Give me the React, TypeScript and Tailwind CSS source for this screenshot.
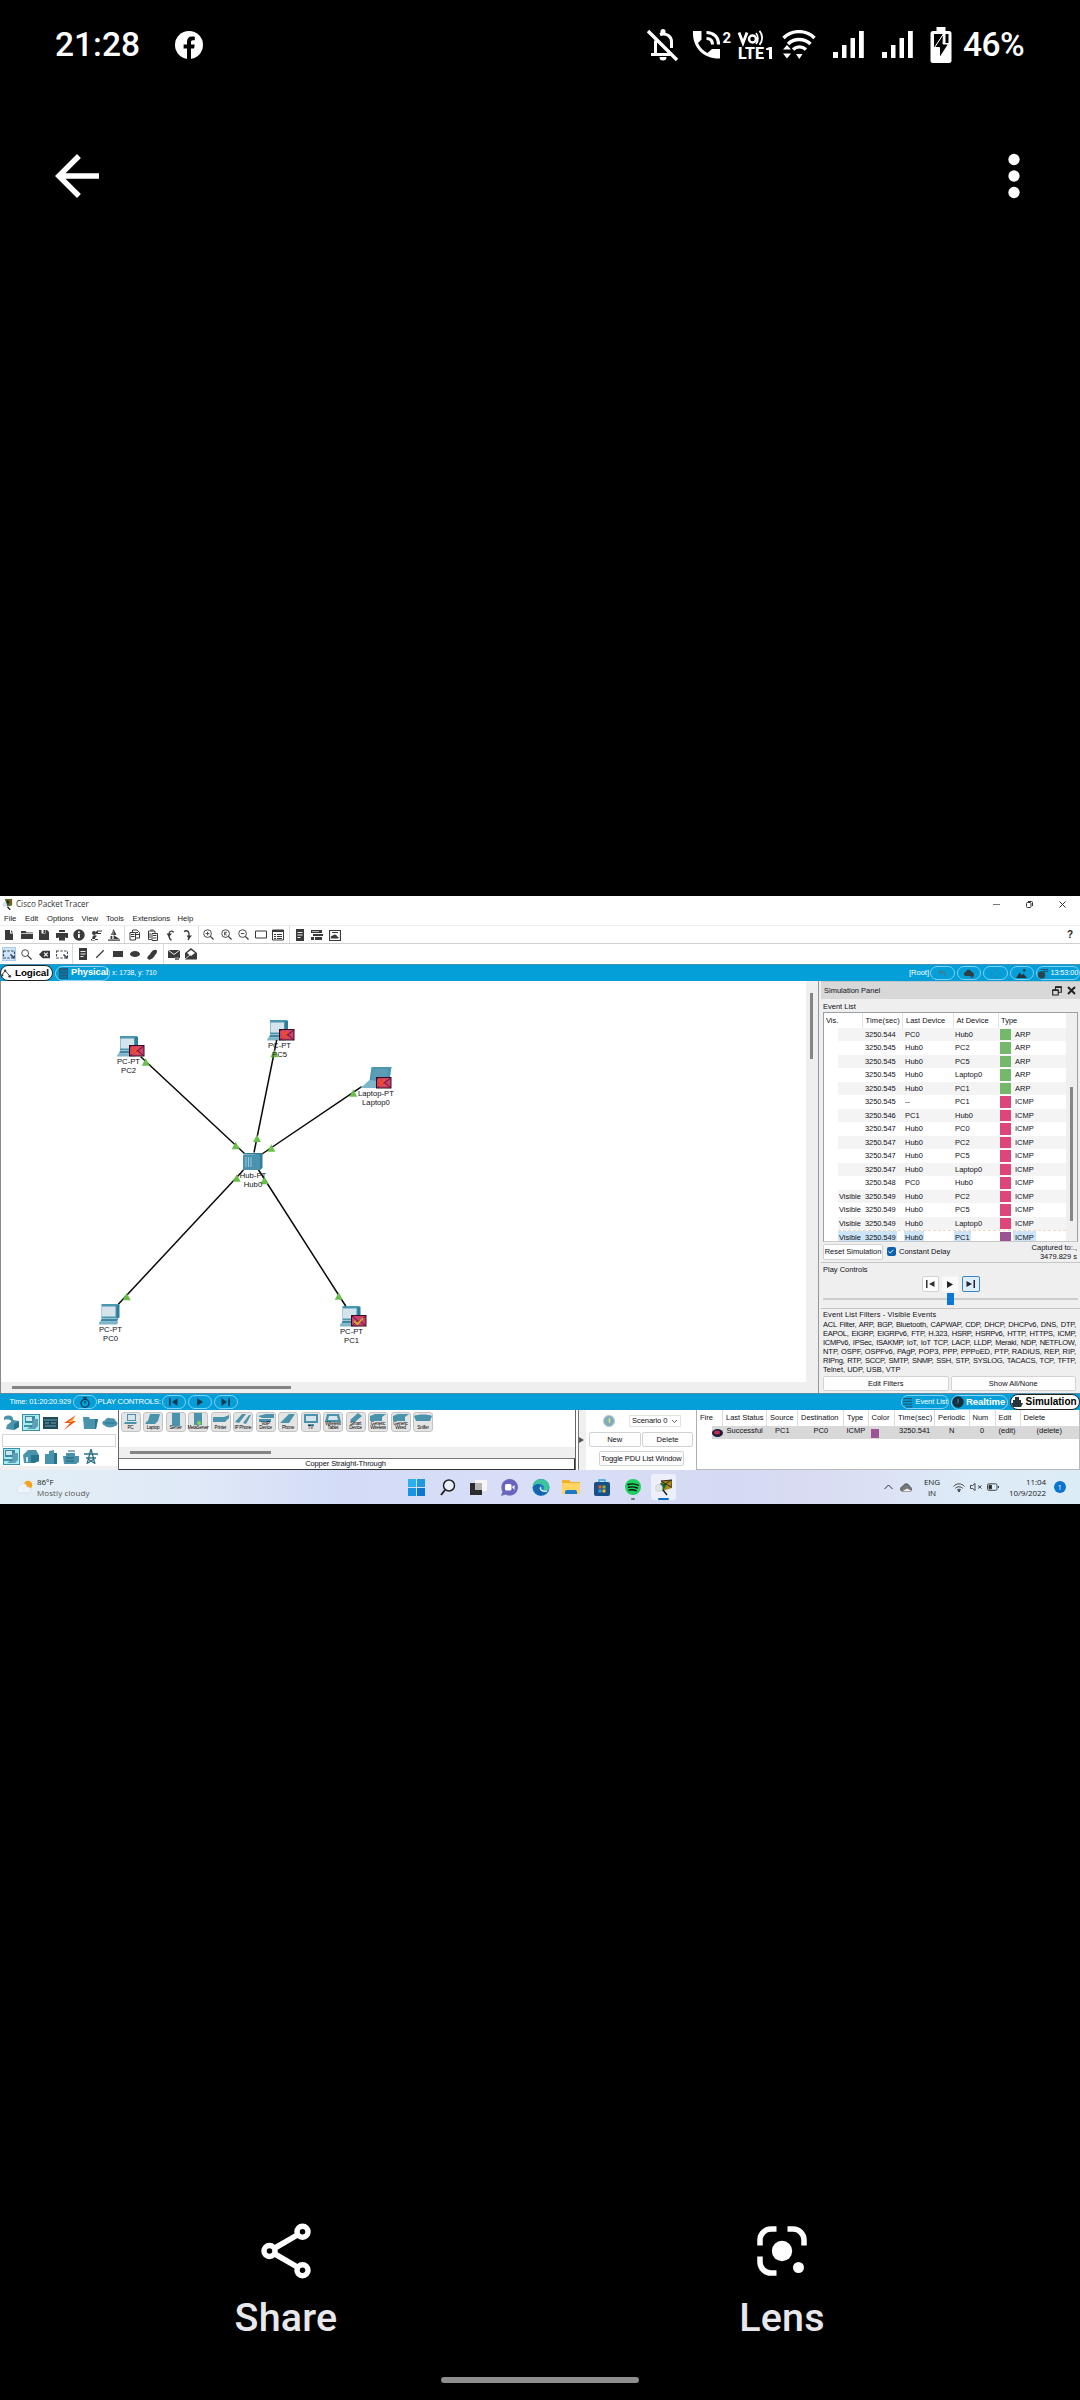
import React from "react";

type Kids = { children?: React.ReactNode };

/* ---------- generic helpers ---------- */

function G({ children, s = 12, c = "#3a3a3a" }: Kids & { s?: number; c?: string }) {
  return (
    <svg width={s} height={s} viewBox="0 0 12 12" fill={c} stroke="none" className="shrink-0 block">
      {children}
    </svg>
  );
}

function Cell({ children }: Kids) {
  return <div className="w-[17.4px] shrink-0 flex items-center justify-center">{children}</div>;
}

function Sep() {
  return <div className="w-px h-full bg-[#dcdcdc] mx-[1.5px] shrink-0" />;
}

/* ---------- phone chrome ---------- */

function Signal() {
  return (
    <svg width="31" height="29" viewBox="0 0 31 29" fill="#fff">
      <rect x="0" y="22" width="5" height="6" />
      <rect x="9" y="15" width="4.5" height="13" />
      <rect x="17.5" y="8" width="4.5" height="20" />
      <rect x="26" y="1" width="4.8" height="27" />
    </svg>
  );
}

function StatusBar() {
  return (
    <div className="h-[88px] pt-[1px] shrink-0 flex items-center px-[55px] text-white font-['Roboto']">
      <span className="text-[33.5px] font-medium leading-none w-[120px] pt-[1px]">21:28</span>
      <svg width="28" height="28" viewBox="0 0 28 28">
        <circle cx="14" cy="14" r="14" fill="#fff" />
        <path d="M12 28V17.600H8.600v-4H12v-3C12 7.200 14 5.400 17 5.400c1 0 2 .1 2.800.3v3.500h-1.800c-1.600 0-2 .8-2 1.900v2.500h3.700l-.6 4H16V28z" fill="#000" />
      </svg>
      <div className="ml-auto flex items-center">
        <svg width="32" height="32" viewBox="0 0 32 32" fill="none" stroke="#fff" strokeWidth="3">
          <path d="M4 25.500h19M8.500 25V11.500M13 5.500c6-2 11.500 1.500 11.500 7.500v6" />
          <path d="M1 2l29 29" strokeWidth="3.400" />
          <path d="M12.500 28h7a3.500 3.500 0 0 1-7 0zM13.500 5V2.500a2.500 2.500 0 0 1 5 0V5z" fill="#fff" stroke="none" />
        </svg>
        <svg width="40" height="30" viewBox="0 0 40 30" fill="#fff" className="ml-[13px] overflow-visible">
          <path d="M1 1h8.500v8.500L6 13c2 4.500 5.500 8 9.500 10l4.500-4h8v9.500C12 29 0 18 1 1z" />
          <path d="M14.500 2.500c7 0 12 4.500 12 12M14.500 8.500c4 0 6 2.500 6 6" fill="none" stroke="#fff" strokeWidth="3.200" />
          <text x="30.500" y="12.500" fontSize="15" fontFamily="Roboto" fontWeight="700">2</text>
        </svg>
        <svg width="36" height="30" viewBox="0 0 36 30" fill="#fff" className="ml-[6px] overflow-visible">
          <path d="M1 2.500l4 10.500 4-10.500" fill="none" stroke="#fff" strokeWidth="2.800" />
          <circle cx="14.500" cy="9" r="3.500" fill="none" stroke="#fff" strokeWidth="2.500" />
          <path d="M18 3c2.500 3 2.500 8 0 11M21.500.8c3.500 4 3.500 10 0 14" fill="none" stroke="#fff" strokeWidth="1.800" />
          <text x="0" y="29" fontSize="16" textLength="26" lengthAdjust="spacingAndGlyphs" fontFamily="Roboto" fontWeight="800">LTE</text>
          <path d="M28 18.500l3.500-1.500h2.500v12h-3v-9h-3z" />
        </svg>
        <svg width="34" height="30" viewBox="0 0 34 30" fill="none" stroke="#fff" strokeWidth="3.400" className="ml-[8px]">
          <path d="M1.500 8c8.500-8.500 22.500-8.500 31 0M6 14c6-6 16-6 22.500 0M11 19.500c4-3.500 9-3.500 13 0" />
          <path d="M14 24h6.500l-3.200 5zM1 19.500h8L5 15zM1 23.500h8L5 28.500z" fill="#fff" stroke="none" />
        </svg>
        <div className="ml-[17px]"><Signal /></div>
        <div className="ml-[18px]"><Signal /></div>
        <svg width="22" height="36" viewBox="0 0 22 36" className="ml-[17px]">
          <path d="M6.500 0h9v4H19a2.500 2.500 0 0 1 2.500 2.500v27A2.500 2.500 0 0 1 19 36H3a2.500 2.500 0 0 1-2.500-2.500v-27A2.500 2.500 0 0 1 3 4h3.500z" fill="#fff" />
          <path d="M4 7h9L5 20H4zM18.500 7v9h-3V7z" fill="#000" />
          <path d="M13.500 7L4.500 20.500h5V31l9-14h-5.500z" fill="#000" stroke="#fff" strokeWidth="1" />
        </svg>
        <span className="ml-[11px] text-[33.5px] font-medium leading-none w-[62px] pt-[1px] tracking-[-0.6px]">46%</span>
      </div>
    </div>
  );
}

/* ---------- toolbars ---------- */

function TopBars() {
  const K = "#3a3a3a";
  return (
    <div className="shrink-0 flex flex-col">
      <div className="h-[17px] flex items-center pl-[2px] pr-[14px]">
        <G s={11}>
          <path d="M3 0h8v7L6 8z" fill="#5c6b23" /><path d="M5 1l3 2-2 3z" fill="#1c1c14" /><path d="M8 2h3v3z" fill="#c03b22" /><path d="M4 3l4 1-2 4z" fill="#23492a" />
          <circle cx="3" cy="6" r="2.500" fill="#c9d8e4" opacity=".8" /><path d="M6 8.500L9 12" stroke="#222" strokeWidth="1.500" />
        </G>
        <span className="ml-[3px] text-[8.1px] leading-none text-[#333] font-['Open_Sans']">Cisco Packet Tracer</span>
        <div className="ml-auto flex items-center gap-[26px]">
          <div className="w-[7px] h-px bg-[#777]" />
          <svg width="7" height="7" viewBox="0 0 7 7" fill="none" stroke="#333" strokeWidth="1"><rect x=".5" y="1.500" width="4.500" height="5" rx="1" /><path d="M2 .5h3.500a1 1 0 0 1 1 1V5" /></svg>
          <svg width="7" height="7" viewBox="0 0 7 7" stroke="#333" strokeWidth="1"><path d="M.5.5l6 6M6.500.5l-6 6" /></svg>
        </div>
      </div>
      <div className="h-[12px] flex items-center pl-[4px] text-[7.7px] leading-none text-[#222]">
        <span className="w-[21px]">File</span><span className="w-[22px]">Edit</span><span className="w-[34.5px]">Options</span>
        <span className="w-[24.5px]">View</span><span className="w-[26.5px]">Tools</span><span className="w-[45px]">Extensions</span><span>Help</span>
      </div>
      <div className="h-[19px] border-y border-t-[#ececec] border-b-[#cfcfcf] flex items-center pl-[0.8px]">
        <Cell><G><path d="M2 1h5v3.500h3V11H2zM8 1l2 2.500H8z" /></G></Cell>
        <Cell><G><path d="M0 2h4.500l1 1.500H12V10H0z" /><path d="M0 4.500h12" stroke="#fff" strokeWidth=".7" /></G></Cell>
        <Cell><G><path d="M1 1h8l2 2v8H1z" /><path d="M3.500 1h4v3.500h-4z" fill="#fff" /><path d="M5.500 1h1.500v3H5.500z" /></G></Cell>
        <Cell><G><path d="M3 1h6v2H3zM0 4h12v5H9.500V8h-7v1H0zM3 8h6v3.500H3z" /></G></Cell>
        <Cell><G><circle cx="6" cy="6" r="5.700" /><path d="M5 5h1.800v4H5zM5 2.500h1.800v1.500H5z" fill="#fff" /></G></Cell>
        <Cell><G><circle cx="4" cy="4" r="2" /><path d="M2 11h6v-1H5c0-1.500 1-3 2.500-3C5 5.500 3 6 2.500 8zM5 4.500l2-3h5v1H8v1.500h3v1H7zM1 10h4v1.500H1z" /></G></Cell>
        <Cell><G><path d="M5.500 0L8.500 6H3zM0 10.500h12v1.200H0zM2.500 7h2v3h-2zM5.500 6l6 4h-6z" /><path d="M5 2v8" stroke="#fff" strokeWidth=".6" /></G></Cell>
        <Sep />
        <Cell><G><g fill="none" stroke={K} strokeWidth="1"><path d="M1 3.500h5.500V11H1zM3.500 3V1H8l2.500 2.500V9H7" /><path d="M2 5.500h3.500M2 7.500h3.500M7 3.500h2M7 5.500h3" /></g></G></Cell>
        <Cell><G><g fill="none" stroke={K} strokeWidth="1"><path d="M1.500 2H8v2M1.500 2v8.500h3M5 4.500h5.500v7H5z" /><path d="M3.500 1h3M6 6.500h3.500M6 9h3.500M3 4v5" /></g></G></Cell>
        <Cell><G><path d="M7.500 11C4.500 10 5 6.500 5 4.500M5 4.500c.5-3 4-3 4.500-1" fill="none" stroke={K} strokeWidth="1.400" /><path d="M2.500 4.500H8L5 8z" /></G></Cell>
        <Cell><G><path d="M3 2.500c4-2 5.500.5 5 5M7 11l1.500-3" fill="none" stroke={K} strokeWidth="1.400" /><path d="M5.500 6.500H11L8 10z" /></G></Cell>
        <Sep />
        <Zoom m="M3 5h4M5 3v4" /><Zoom m="M4 7V3.500h2L4.500 5 6 7" /><Zoom m="M3 5h4" />
        <Cell><svg width="12" height="9" viewBox="0 0 12 9" fill="none" stroke={K}><path d="M.5 1h11v7H.5z" strokeWidth="1" /></svg></Cell>
        <Cell><G><path d="M.5 1h11v10H.5z" fill="none" stroke={K} /><path d="M.5 1h11v2H.5zM2 5h2v1H2zM5 5h5v1H5zM2 7h2v1H2zM5 7h5v1H5zM2 9h2v1H2zM5 9h5v1H5z" /></G></Cell>
        <Sep />
        <Cell><G><path d="M2 0h8v12H2z" /><path d="M3.500 3.500h5M3.500 6h5M3.500 8.500h3" stroke="#fff" strokeWidth=".9" /></G></Cell>
        <Cell><G><path d="M0 1h11v3H0zM2 5h10v2H2zM0 8h3v3H0zM4 8h7v3H4z" /><path d="M1 2.500h7" stroke="#fff" strokeWidth=".6" /></G></Cell>
        <Cell><G><path d="M.5 1.500h11v10H.5z" fill="none" stroke={K} strokeWidth="1.200" /><path d="M2 9.500c-1-3 2-3 2-3 1-2 4-1 4 1 2 0 2 1.500 1 2zM3 3h6v1H3z" /></G></Cell>
        <span className="ml-auto mr-[7px] text-[10px] font-bold leading-none text-[#222]">?</span>
      </div>
      <div className="h-[20px] flex items-center pl-[0.8px]">
        <Cell><div className="w-[14px] h-[14px] bg-[#cce4f7] border border-[#a9cdea] flex items-center justify-center shrink-0"><Dash /></div></Cell>
        <Cell><G s={11}><circle cx="4.500" cy="4.500" r="3.700" fill="none" stroke={K} strokeWidth="1" /><path d="M7 7l4.500 4.500" stroke={K} strokeWidth="1.300" /></G></Cell>
        <Cell><G s={11}><path d="M0 6l4-4h8v8H4z" /><path d="M5.500 4l4 4M9.500 4l-4 4" stroke="#fff" strokeWidth="1.200" /></G></Cell>
        <Cell><Dash /></Cell>
        <Sep />
        <Cell><G><path d="M2 0h8v12H2z" /><path d="M3.500 3.500h5M3.500 6h5M3.500 8.500h3" stroke="#fff" strokeWidth=".9" /></G></Cell>
        <Cell><G s={10}><path d="M1.500 10.500l9-9" stroke={K} strokeWidth="1.400" /></G></Cell>
        <Cell><div className="w-[10px] h-[6.5px] bg-[#3a3a3a]" /></Cell>
        <Cell><div className="w-[10px] h-[6px] rounded-[50%] bg-[#3a3a3a]" /></Cell>
        <Cell><G s={11}><path d="M5 3c2-3 6-3 6-.5S9 6 8 8s-5 5-7 3 1-4 2-5 1-2 2-3z" /></G></Cell>
        <Sep />
        <Cell><G><path d="M0 2h12v8H0z" /><path d="M0 2l6 4.500L12 2" fill="none" stroke="#fff" strokeWidth=".9" /><path d="M7 12V9h4v3z" fill="#777" /></G></Cell>
        <Cell><G><path d="M0 5l6-5 6 5v6.500H0z" /><path d="M2 5l4-3 4 3-4 3z" fill="#fff" /><path d="M0 11l5-4" stroke="#fff" strokeWidth=".8" /></G></Cell>
      </div>
    </div>
  );
}

function Zoom({ m }: { m: string }) {
  return (
    <Cell>
      <svg width="11" height="11" viewBox="0 0 12 12" fill="none" stroke="#3a3a3a" strokeWidth="1"><circle cx="5" cy="5" r="4.200" /><path d={m} /><path d="M8 8l3.500 3.500" strokeWidth="1.400" /></svg>
    </Cell>
  );
}

function Dash() {
  return (
    <svg width="12" height="9" viewBox="0 0 12 9" fill="none" stroke="#3a4650" strokeWidth="1.100" className="shrink-0">
      <path d="M.5 1h11v7H.5z" strokeDasharray="2.500 1.300" /><path d="M7.500 4.500l4 4" strokeWidth="1.600" />
    </svg>
  );
}

function Pill({ children }: Kids) {
  return (
    <div className="w-[24.5px] h-[13.5px] rounded-full border border-[#7fd0f3] flex items-center justify-center shrink-0">{children}</div>
  );
}

function NavBar() {
  return (
    <div className="h-[17px] shrink-0 bg-[#049fd9] border-t border-[#3f94b8] flex items-center text-white text-[7.5px] leading-none">
      <div className="w-[53px] h-[16px] rounded-full bg-white border border-[#222] text-black flex items-center font-bold text-[9.9px]">
        <G s={11}><path d="M1 7.500L4.500 3 9 8" fill="none" stroke="#333" strokeWidth="1" /><circle cx="1.500" cy="8" r="1.200" /><circle cx="4.500" cy="3" r="1.300" /><circle cx="9.500" cy="9" r="1.500" /></G>
        <span className="ml-[3px] tracking-[-0.1px]">Logical</span>
      </div>
      <div className="w-[55px] h-[15px] ml-[1.5px] rounded-full border border-[#8fd5f3] flex items-center font-bold text-[9.3px]">
        <svg width="9" height="11" viewBox="0 0 9 11" className="ml-[3px]"><path d="M0 0h9v11H0z" fill="#1c5f80" /><path d="M1 3h7M1 6h7M1 9h7" stroke="#0b87b8" strokeWidth="1" /></svg>
        <span className="ml-[3.5px] tracking-[-0.05px]">Physical</span>
      </div>
      <span className="ml-[2.5px] text-[6.8px]">x: 1738, y: 710</span>
      <span className="ml-auto text-[7.5px]">[Root]</span>
      <div className="flex gap-[2px] ml-[1px]">
        <Pill><G s={10}><path d="M1 5l4-3v2h5v6H8V6H5v2z" fill="#3d7d95" /></G></Pill>
        <Pill><G s={12}><path d="M1 7c0-2 2-2 2-2 0-3 5-3 5.500 0 3 0 3 4 1 4H3C1 9 1 8 1 7z" fill="#303c42" /><path d="M7 9h4M9 7v4" stroke="#303c42" strokeWidth="1.200" /></G></Pill>
        <Pill><G s={11}><path d="M6 0l2 3H4zM6 12l2-3H4zM0 6l3-2v4zM12 6L9 4v4z" fill="#2d89ad" /></G></Pill>
        <Pill><G s={11}><path d="M0 11l4-6 2.500 3L8 6l4 5z" fill="#26343b" /><circle cx="9" cy="2.500" r="1.300" fill="#26343b" /></G></Pill>
        <div className="w-[44px] h-[13.5px] rounded-full border border-[#7fd0f3] flex items-center shrink-0">
          <G s={11}><circle cx="5" cy="7.500" r="4" fill="#2a4350" /><path d="M4 1h8v1H4zM7 3h5v1H7z" fill="#2a4350" /></G>
          <span className="ml-[2.5px] text-[7.3px] whitespace-nowrap tracking-[-0.1px]">13:53:00</span>
        </div>
      </div>
    </div>
  );
}

/* ---------- workspace ---------- */

function Pc({ x, y }: { x: number; y: number }) {
  return (
    <g transform={`translate(${x} ${y})`}>
      <path d="M3 0h17v14H3z" fill="#4b97b0" /><path d="M18 1.500l3-1v13l-3 1z" fill="#2f7d99" />
      <path d="M3.500 2.500h13.500v10H3.500z" fill="#d5e4ec" />
      <path d="M3 14.500h17l-1.500 3H2z" fill="#3e87a2" /><path d="M1 17.500h19L18.500 20.500H0z" fill="#7db6c8" />
    </g>
  );
}

function Envelope({ x, y, ok }: { x: number; y: number; ok?: boolean }) {
  return (
    <g transform={`translate(${x} ${y})`}>
      <rect x=".5" y=".5" width="14.500" height="10.500" fill="#d0406f" stroke="#30101c" />
      <path d="M1 1l6.500 5.500L15 1M1 11l5-5M15 11L9 6" fill="none" stroke="#5e1430" strokeWidth="1" />
      {ok ? <path d="M3 6l3.500 3L12 3" fill="none" stroke="#c5b52a" strokeWidth="1.800" /> : <path d="M2.500 2l6 7M9 2L2.500 9" stroke="#f5501c" strokeWidth="1.700" />}
    </g>
  );
}

const tips: [number, number][] = [
  [145.7, 1061.7], [235.7, 1145.3], [274.3, 1053.3], [257, 1138], [353.3, 1092.7],
  [271.3, 1147.7], [126.7, 1296.3], [236.7, 1177.7], [338.7, 1295.7], [264.3, 1180.3],
];

const labels: [number, number, string, string][] = [
  [128.5, 1057, "PC-PT", "PC2"], [279.5, 1040.5, "PC-PT", "PC5"], [376, 1089, "Laptop-PT", "Laptop0"],
  [253, 1170.5, "Hub-PT", "Hub0"], [110.5, 1325, "PC-PT", "PC0"], [351.5, 1327, "PC-PT", "PC1"],
];

function Workspace() {
  return (
    <div className="flex-1 flex flex-col bg-[#efefef] border-l border-[#8a8a8a]">
      <div className="flex h-[401px]">
        <div className="w-[805px] bg-white relative">
          <svg width="805" height="401" viewBox="1 981 805 401" className="absolute inset-0">
            <Pc x={117} y={1036} /><Pc x={267} y={1020} /><Pc x={98.5} y={1304} /><Pc x={339.5} y={1306} />
            <g stroke="#0a0a0a" strokeWidth="1.500">
              <path d="M140.700 1056.700L244.500 1153.500M276.700 1040L254 1152.500M361.700 1086.700L262 1154M118.300 1304.300L243.500 1170M345.700 1306L258 1169" />
            </g>
            <path d="M371.500 1067h20l-2 14h-20z" fill="#4b97b0" /><path d="M373 1069h15l-1.500 10.500h-15z" fill="#5b9db6" /><path d="M369.500 1080l8 1-1 7h-16z" fill="#7db6c8" />
            <path d="M243 1154.500l2-1.500h17.500l-2 2zM260 1155l2.500-2v15l-2.500 2z" fill="#2f7d99" /><path d="M243 1155h17v15h-17z" fill="#4b92ae" />
            <path d="M246 1157v10M248.500 1157v10M251 1157v10" stroke="#9ed0e0" strokeWidth=".9" />
            <Envelope x={129} y={1045} /><Envelope x={279} y={1029} /><Envelope x={376} y={1077} /><Envelope x={351} y={1315} ok />
            {tips.map(([x, y], i) => (
              <path key={i} d={`M${x} ${y - 3.5}l4 7.500h-8z`} fill="#6abf4b" />
            ))}
          </svg>
          {labels.map(([x, y, a, b]) => (
            <div key={b} className="absolute -translate-x-1/2 text-center text-[7.7px] leading-[9px] text-[#101018] whitespace-nowrap" style={{ left: x - 1, top: y - 981 }}>
              {a}<br />{b}
            </div>
          ))}
        </div>
        <div className="flex-1 pt-[12px] pl-[4px]"><div className="w-[3px] h-[66px] bg-[#858585]" /></div>
      </div>
      <div className="pt-[4px] pl-[11px]"><div className="w-[279px] h-[3px] bg-[#858585]" /></div>
    </div>
  );
}

/* ---------- simulation panel ---------- */

const events: [string, string, string, string][] = [
  ["", "3250.544", "PC0", "Hub0"], ["", "3250.545", "Hub0", "PC2"], ["", "3250.545", "Hub0", "PC5"], ["", "3250.545", "Hub0", "Laptop0"],
  ["", "3250.545", "Hub0", "PC1"], ["", "3250.545", "--", "PC1"], ["", "3250.546", "PC1", "Hub0"], ["", "3250.547", "Hub0", "PC0"],
  ["", "3250.547", "Hub0", "PC2"], ["", "3250.547", "Hub0", "PC5"], ["", "3250.547", "Hub0", "Laptop0"], ["", "3250.548", "PC0", "Hub0"],
  ["Visible", "3250.549", "Hub0", "PC2"], ["Visible", "3250.549", "Hub0", "PC5"], ["Visible", "3250.549", "Hub0", "Laptop0"], ["Visible", "3250.549", "Hub0", "PC1"],
];

const filters: [string, string][] = [
  ["ACL Filter, ARP, BGP, Bluetooth, CAPWAP, CDP, DHCP, DHCPv6, DNS, DTP,", "tracking-[-0.2px]"],
  ["EAPOL, EIGRP, EIGRPv6, FTP, H.323, HSRP, HSRPv6, HTTP, HTTPS, ICMP,", "tracking-[-0.25px]"],
  ["ICMPv6, IPSec, ISAKMP, IoT, IoT TCP, LACP, LLDP, Meraki, NDP, NETFLOW,", "tracking-[-0.25px]"],
  ["NTP, OSPF, OSPFv6, PAgP, POP3, PPP, PPPoED, PTP, RADIUS, REP, RIP,", "tracking-[-0.06px]"],
  ["RIPng, RTP, SCCP, SMTP, SNMP, SSH, STP, SYSLOG, TACACS, TCP, TFTP,", "tracking-[-0.25px]"],
];

function Btn({ children, k = "" }: Kids & { k?: string }) {
  return <div className={`border rounded-[2px] flex items-center justify-center whitespace-nowrap ${k}`}>{children}</div>;
}

function SimPanel() {
  return (
    <div className="w-[262px] shrink-0 border-l border-[#8e99a0] bg-[#efefef] pl-[2px] text-[7.5px] leading-none text-[#101018] flex flex-col">
      <div className="h-[18px] bg-[#d8d8d8] border-t border-[#b9c6cc] flex items-center pl-[3px] pr-[4px]">
        <span>Simulation Panel</span>
        <svg width="10" height="10" viewBox="0 0 10 10" fill="none" stroke="#222" className="ml-auto"><path d="M.7 4h5.500v5H.7zM3.500 3.500V.8h5.800v5.500H6.500" strokeWidth="1.100" /><path d="M3.500 1.200h6M.5 4.200h6" strokeWidth="1.600" /></svg>
        <svg width="9" height="9" viewBox="0 0 9 9" stroke="#222" strokeWidth="2" className="ml-[5px]"><path d="M1 1l7 7M8 1L1 8" /></svg>
      </div>
      <div className="h-[13px] flex items-center pl-[2px] pt-[2px]">Event List</div>
      <div className="h-[230px] ml-[2px] mr-[2px] bg-white border border-[#9aa0a6] border-b-[#c8c8c8] flex overflow-hidden">
        <div className="w-[242px] flex flex-col">
          <div className="h-[14.5px] shrink-0 flex items-center">
            <span className="w-[39px] pl-[2px] h-full flex items-center border-r border-[#e3e3e3]">Vis.</span>
            <span className="w-[40px] pl-[2.5px] h-full flex items-center border-r border-[#e3e3e3] tracking-[0.15px]">Time(sec)</span>
            <span className="w-[51px] pl-[3px] h-full flex items-center border-r border-[#e3e3e3] whitespace-nowrap">Last Device</span>
            <span className="w-[45px] pl-[2.5px] h-full flex items-center border-r border-[#e3e3e3]">At Device</span>
            <span className="pl-[2px]">Type</span>
          </div>
          {events.map(([v, t, l, a], i) => {
            const last = i === 15;
            const hl = last ? "bg-[#cce4f7]" : "";
            return (
              <div key={i} className={`h-[13.5px] shrink-0 flex items-center ml-[14px] ${last ? "border-t border-dashed border-[#f0d9c0]" : i % 2 === 0 ? "bg-[#f4f4f4]" : ""}`}>
                <span className={`w-[25px] h-full flex items-center pl-[1px] ${hl}`}>{v}</span>
                <span className={`w-[34px] h-full flex items-center pl-[2px] tracking-[-0.08px] ${hl}`}>{t}</span>
                <span className="w-[7px]" />
                <span className="w-[50px] h-full flex items-center"><span className={`h-full flex items-center px-[1px] ${hl}`}>{l}</span></span>
                <span className="w-[46px] h-full flex items-center"><span className={`h-full flex items-center px-[1px] ${hl}`}>{a}</span></span>
                <span className={`w-[11px] h-[11.5px] ${last ? "bg-[#9c5395]" : i < 5 ? "bg-[#74b86c]" : "bg-[#dd457b]"}`} />
                <span className={`ml-[2px] px-[2px] h-full flex items-center ${hl}`}>{i < 5 ? "ARP" : "ICMP"}</span>
              </div>
            );
          })}
        </div>
        <div className="flex-1 bg-[#efefef] pt-[74px] pl-[4px]"><div className="w-[3px] h-[134px] bg-[#858585]" /></div>
      </div>
      <div className="h-[21px] flex items-center border-b border-[#c6c6c6] pl-[2px] pr-[3px] pb-[2px] pt-[1px]">
        <Btn k="w-[60px] h-[16px] bg-[#fdfdfd] border-[#d2d2d2]">Reset Simulation</Btn>
        <div className="w-[9.5px] h-[9.5px] ml-[3.5px] rounded-[2px] bg-[#0d5fb0] flex items-center justify-center">
          <svg width="6" height="5" viewBox="0 0 6 5" fill="none" stroke="#fff"><path d="M.5 2.500L2.300 4 5.500.8" /></svg>
        </div>
        <span className="ml-[3px]">Constant Delay</span>
        <span className="ml-auto text-right leading-[9px]">Captured to:.,<br />3479.829 s</span>
      </div>
      <div className="h-[46px] border-b border-[#c6c6c6] pl-[2px] pr-[2px] pt-[2px]">
        <div className="h-[10px] flex items-center">Play Controls</div>
        <div className="flex justify-center gap-[3px] mt-[1px]">
          <Btn k="w-[17px] h-[16px] bg-[#fdfdfd] border-[#d2d2d2]"><svg width="9" height="8" viewBox="0 0 9 8" fill="#333"><path d="M0 0h1.500v8H0zM8.500 1v6L3 4z" /></svg></Btn>
          <Btn k="w-[17px] h-[16px] bg-[#fafafa] border-[#f4f4f4]"><svg width="6" height="7" viewBox="0 0 6 7" fill="#222"><path d="M0 0v7l6-3.500z" /></svg></Btn>
          <Btn k="w-[18px] h-[16px] bg-[#dfeefa] border-[#3a86c4]"><svg width="9" height="8" viewBox="0 0 9 8" fill="#223"><path d="M7.500 0H9v8H7.500zM.5 1v6L6 4z" /></svg></Btn>
        </div>
        <div className="h-[12px] mt-[1px] flex items-center justify-center relative">
          <div className="w-full h-[1.5px] bg-[#cdcdcd]" />
          <div className="absolute w-[7px] h-[12px] bg-[#0a78d4] left-[123.5px] top-0" />
        </div>
      </div>
      <div className="pl-[2px] pr-[4px] pt-[1px] flex-1">
        <div className="h-[10px] flex items-center tracking-[0.12px]">Event List Filters - Visible Events</div>
        {filters.map(([f, k]) => <div key={f} className={`h-[9px] leading-[9px] whitespace-nowrap text-justify [text-align-last:justify] ${k}`}>{f}</div>)}
        <div className="h-[9px] leading-[9px]">Telnet, UDP, USB, VTP</div>
        <div className="flex gap-[2px] mt-[2px]">
          <Btn k="flex-1 h-[15px] bg-[#fdfdfd] border-[#d2d2d2]">Edit Filters</Btn>
          <Btn k="flex-1 h-[15px] bg-[#fdfdfd] border-[#d2d2d2]">Show All/None</Btn>
        </div>
      </div>
    </div>
  );
}

/* ---------- bottom of the desktop app ---------- */

function PlayBar() {
  return (
    <div className="h-[17px] shrink-0 bg-[#049fd9] border-t border-[#5a8ba3] flex items-center text-white text-[7.7px] leading-none pl-[9.5px]">
      <span className="w-[63px] whitespace-nowrap text-[7.4px] tracking-[-0.1px]">Time: 01:20:20.929</span>
      <Pill><svg width="10" height="11" viewBox="0 0 10 11" fill="none" stroke="#0d3b52" strokeWidth="1.200"><circle cx="5" cy="6.300" r="4" /><path d="M5 6.500V4M3 .7h4M5 1v1.500" /></svg></Pill>
      <span className="w-[64px] whitespace-nowrap text-[7.7px] tracking-[-0.2px] ml-[0.5px]">PLAY CONTROLS:</span>
      <div className="flex gap-[1.5px]">
        <Pill><svg width="9" height="8" viewBox="0 0 9 8" fill="#0d3b52"><path d="M0 0h1.700v8H0zM8.500 0v8L3 4z" /></svg></Pill>
        <Pill><svg width="6" height="8" viewBox="0 0 6 8" fill="#0d3b52"><path d="M0 0v8l6-4z" /></svg></Pill>
        <Pill><svg width="9" height="8" viewBox="0 0 9 8" fill="#0d3b52"><path d="M7.300 0H9v8H7.300zM.5 0v8L6 4z" /></svg></Pill>
      </div>
      <div className="ml-auto flex items-center gap-[2px]">
        <div className="w-[48px] h-[13.5px] rounded-full border border-[#7fd0f3] flex items-center shrink-0">
          <G s={11}><path d="M1 1h10v1.500H1zM1 4h10v1.500H1zM1 7h10v1.500H1zM4 10h7v1.500H4z" fill="#1d5e7c" /></G>
          <span className="ml-[2.5px] text-[7.4px] whitespace-nowrap tracking-[-0.05px]">Event List</span>
        </div>
        <div className="w-[57px] h-[15px] rounded-full border border-[#8fd5f3] flex items-center font-bold text-[9.6px] shrink-0">
          <G s={12}><circle cx="6" cy="6" r="5.700" fill="#14303e" /><path d="M6 3v3.500l-1 1" stroke="#5d8ba0" fill="none" /></G>
          <span className="ml-[2px] tracking-[-0.1px]">Realtime</span>
        </div>
        <div className="w-[70px] h-[16px] rounded-full bg-white border border-[#222] text-black flex items-center font-bold text-[10px] shrink-0">
          <G s={12}><path d="M0 7h12l-2 4H2zM2 4h8v3H2zM4 1h4v3H4z" fill="#26343b" /></G>
          <span className="ml-[2.5px]">Simulation</span>
        </div>
      </div>
    </div>
  );
}

const T = "#4a93ac";
const tiles: [string, string, string][] = [
  ["PC", "", "M5 1h9v7H5zM3 9h12l-1 2H2z"], ["Laptop", "", "M6 1h10l-2 7H4zM3 8h11l-3 3H1z"], ["Server", "", "M5 0h8v13H5z"],
  ["MetaServer", "", "M5 0h8v12H5z"], ["Printer", "", "M1 4h11l5-2v3l-4 4H1z"], ["IP Phone", "", "M1 9l7-8h4L5 10zM9 10l6-8h2l-5 9z"],
  ["VoIP", "Device", "M1 3l8-2h8v4H5zM2 6h12v3H2z"], ["Phone", "", "M1 10l9-9h6l-6 9z"], ["TV", "", "M2 1h14v9H2zM6 11h6v2H6z"],
  ["Wireless", "Tablet", "M3 1h12l2 8H1z"], ["Smart", "Device", "M3 7l8-7 4 3-8 7z"], ["Generic", "Wireless", "M1 3l5-2h11l-4 3v4H1z"],
  ["Generic", "Wired", "M1 3l5-2h11l-4 3v4H1z"], ["Sniffer", "", "M0 3c3-2 15-2 18 0l-2 5H2z"],
];

function PcMini() {
  return <svg width="15" height="13" viewBox="0 0 15 13"><path d="M1 0h10v7H1z" fill="#3c88a3" /><path d="M2 1h6v4H2z" fill="#c9e8f0" /><path d="M9 3h5v7l-3 3H3l5-4z" fill="#5f9fb5" /><path d="M0 10h8" stroke="#27748f" strokeWidth="1.500" /></svg>;
}

function Devices() {
  const sel = "bg-[#a5eef0] border border-[#3a8da5]";
  return (
    <div className="w-[118px] shrink-0 flex flex-col bg-white border-b-4 border-[#f0f0f0]">
      <div className="h-[24px] flex items-center pl-[2px] gap-[1px] pt-[1px]">
        <div className="w-[19px] flex justify-center"><svg width="17" height="16" viewBox="0 0 17 16" fill={T}><path d="M1 2c5-3 10-1 9 3l6 1v6l-5 3-8-1 1-4 4-3c1-2-3-3-7-2z" /><path d="M16 6v6l-5 3V9z" fill="#27748f" /></svg></div>
        <div className={`w-[18px] h-[17px] flex justify-center items-center ${sel}`}><PcMini /></div>
        <div className="w-[19px] flex justify-center"><svg width="15" height="12" viewBox="0 0 15 12"><path d="M0 0h15v12H0z" fill="#1f4a5a" /><path d="M1 3h13M2 6h4M8 6h5M2 9h11" stroke="#6fa0b2" /></svg></div>
        <div className="w-[18px] flex justify-center"><svg width="15" height="15" viewBox="0 0 15 15"><path d="M13 0L1 8l6 0-6 7 12-9H8z" fill="#f2541b" /><path d="M12 2L5 7l4 0z" fill="#ffb02e" /></svg></div>
        <div className="w-[20px] flex justify-center"><svg width="15" height="13" viewBox="0 0 15 13" fill={T}><path d="M0 1h6l1 2h8l-2 10H1z" /><path d="M12 3l3 0-2 10h-1z" fill="#27748f" /></svg></div>
        <div className="w-[17px] flex justify-center"><svg width="16" height="11" viewBox="0 0 16 11" fill={T}><path d="M2.500 8.500C-1 7 0 3.500 3 3.500 4 1 7 0 9 1.500c2-1 5 .5 4.500 2.500 3 1 2.500 4.500-.5 5-2 2-8 2-10.500-.5z" /><path d="M3 6h10" stroke="#27748f" /></svg></div>
      </div>
      <div className="h-[13px] mx-[2px] border border-[#d6d6d6] bg-white" />
      <div className="h-[19px] flex items-center pl-[3px] gap-[2.5px]">
        <div className={`w-[17px] h-[17px] flex justify-center items-center ${sel}`}><PcMini /></div>
        <div className="w-[17px] flex justify-center"><svg width="16" height="13" viewBox="0 0 16 13" fill={T}><path d="M0 5l5-5h8l3 5v6l-5 2H1z" /><path d="M8 5h8v6l-5 2H8z" fill="#27748f" /><path d="M3 7h2v5H3z" fill="#cde6ee" /></svg></div>
        <div className="w-[17px] flex justify-center"><svg width="12" height="14" viewBox="0 0 12 14" fill={T}><path d="M0 4h4V1l5-1v3h3v11H0z" /><path d="M9 3h3v11H9z" fill="#27748f" /></svg></div>
        <div className="w-[18px] flex justify-center"><svg width="16" height="14" viewBox="0 0 16 14" fill={T}><path d="M0 6h3V3h9v3h4v6l-3 2H1z" /><path d="M5 1h7M3 8h8M3 11h8" stroke="#1d5c73" strokeWidth="1.200" /></svg></div>
        <div className="w-[17px] flex justify-center"><svg width="14" height="15" viewBox="0 0 14 15" fill="none" stroke="#2c6f86" strokeWidth="1.300"><path d="M7 0L3 15M7 0l4 15M0 5h14M2 9h10M4 10l6 4M10 10l-6 4" /></svg></div>
      </div>
    </div>
  );
}

function Picker() {
  return (
    <div className="w-[458px] shrink-0 border-l border-r border-[#666] flex flex-col bg-white">
      <div className="h-[37px] flex gap-[2.5px] pl-[1.5px] pt-[1.5px]">
        {tiles.map(([a, b, d], i) => (
          <div key={i} className="w-[20px] h-[20px] shrink-0 rounded-[3px] bg-[#e4e4e4] border border-[#c4c4c4] relative flex flex-col justify-end items-center">
            <svg width="18" height="13" viewBox="0 0 18 13" className="absolute top-0 left-0" fill={T}>
              <path d={d} />
              {i === 0 && <path d="M6 2h7v5H6z" fill="#d5e4ec" />}
              {i === 8 && <path d="M4 3h10v5H4z" fill="#d5e4ec" />}
              {i === 9 && <path d="M5 3h8l1 4H4z" fill="#d5e4ec" />}
              {i === 3 && <circle cx="10" cy="10" r="2" fill="#8fd14f" />}
            </svg>
            <span className="relative text-[4.6px] leading-[4.3px] text-center text-black tracking-[-0.25px] whitespace-nowrap">{a}{b && <><br />{b}</>}</span>
          </div>
        ))}
      </div>
      <div className="h-[11px] bg-[#efefef] pt-[4px] pl-[11px]"><div className="w-[141px] h-[3px] bg-[#858585]" /></div>
      <div className="h-[12px] border border-l-0 border-[#333] border-t-[#777] flex items-center justify-center text-[7.5px] leading-none text-[#101018]">
        <span className="-ml-[2px] tracking-[-0.1px]">Copper Straight-Through</span>
      </div>
    </div>
  );
}

function Scenario() {
  return (
    <div className="w-[121px] shrink-0 flex bg-white text-[7.6px] leading-none text-[#101018]">
      <div className="w-[3px] bg-white border-r border-[#777]" />
      <div className="w-[7px] bg-[#f0f0f0] flex items-center"><svg width="5" height="6" viewBox="0 0 5 6"><path d="M0 0v6l5-3z" fill="#555" /></svg></div>
      <div className="flex-1 border-r border-[#b0b0b0] px-[3px] pt-[5px]">
        <div className="flex items-center h-[12px] pl-[14px]">
          <div className="w-[12px] h-[12px] rounded-full bg-[#7fadbb] border border-[#b8c6cc] flex items-center justify-center text-[8px] font-bold text-[#f0ea6a]">i</div>
          <div className="ml-[14px] w-[52px] h-[12px] border border-[#e2e2e2] flex items-center pl-[2px] whitespace-nowrap tracking-[-0.1px]">Scenario 0
            <svg width="5" height="3" viewBox="0 0 5 3" className="ml-[5px]" fill="none" stroke="#444" strokeWidth=".8"><path d="M0 0l2.500 2.500L5 0" /></svg>
          </div>
        </div>
        <div className="flex gap-[1.5px] mt-[5px]"><Btn k="w-[51.5px] h-[15px] bg-[#fdfdfd] border-[#d2d2d2]">New</Btn><Btn k="w-[51px] h-[15px] bg-[#fdfdfd] border-[#d2d2d2]">Delete</Btn></div>
        <Btn k="w-[85px] h-[15px] ml-[10px] mt-[4px] bg-[#fdfdfd] border-[#d2d2d2] text-[7.5px] tracking-[-0.1px]">Toggle PDU List Window</Btn>
      </div>
    </div>
  );
}

function PduList() {
  const h = "h-full flex items-center border-r border-[#ddd] pl-[3px] whitespace-nowrap";
  return (
    <div className="flex-1 bg-white text-[7.5px] leading-none text-[#101018] border-b border-[#bbb] border-r overflow-hidden">
      <div className="h-[15.5px] flex items-center">
        <span className="w-[26px] h-full flex items-center pl-[3px] border-r border-[#ddd]">Fire</span><span className={`w-[44px] ${h}`}>Last Status</span>
        <span className={`w-[31px] ${h}`}>Source</span><span className={`w-[46px] ${h}`}>Destination</span><span className={`w-[24.5px] ${h}`}>Type</span>
        <span className={`w-[26.5px] ${h}`}>Color</span><span className={`w-[40px] tracking-[0.15px] ${h}`}>Time(sec)</span><span className={`w-[34.5px] ${h}`}>Periodic</span>
        <span className={`w-[26px] ${h}`}>Num</span><span className={`w-[25px] ${h}`}>Edit</span><span className="pl-[3px]">Delete</span>
      </div>
      <div className="h-[13.5px] ml-[15px] bg-[#d8d8d8] flex items-center pb-[3px]">
        <svg width="11" height="8" viewBox="0 0 11 8" className="mt-[4px] shrink-0"><ellipse cx="5.500" cy="4" rx="5.500" ry="4" fill="#1d1d3a" /><ellipse cx="5" cy="3.500" rx="3" ry="2" fill="#c02c50" /></svg>
        <span className="w-[52px] pl-[3.5px]">Successful</span><span className="w-[38.5px]">PC1</span><span className="w-[33px]">PC0</span><span className="w-[24px]">ICMP</span>
        <span className="w-[8px] h-[8.5px] bg-[#9c5395] mt-[5px]" /><span className="w-[50px] ml-[20.500px]">3250.541</span><span className="w-[31px]">N</span>
        <span className="w-[18.5px]">0</span><span className="w-[38px]">(edit)</span><span>(delete)</span>
      </div>
    </div>
  );
}

/* ---------- Windows taskbar ---------- */

function Taskbar() {
  return (
    <div className="h-[34px] shrink-0 flex items-center bg-[linear-gradient(90deg,#e3eff6_0%,#dfe9f7_18%,#d3dbf7_32%,#d9dff6_50%,#d5daf3_68%,#d9dcf2_76%,#deebf8_90%,#dcecf6_100%)] font-['Open_Sans'] text-[#222] relative">
      <svg width="18" height="14" viewBox="0 0 18 14" className="ml-[15px]"><circle cx="13" cy="5" r="4.300" fill="#f7a21b" /><path d="M4 13a4 4 0 0 1 0-7c2-4 8-3 8 1 5-1 5 6 1 6z" fill="#eef3f9" stroke="#c3d2e4" strokeWidth=".5" /></svg>
      <div className="ml-[4px] text-[8px] leading-[11px] tracking-[-0.05px] w-[100px] -mt-[1px]">86°F<br /><span className="text-[#555] tracking-[0.1px]">Mostly cloudy</span></div>
      <div className="absolute left-[408px] top-0 h-full flex items-center">
        <svg width="17" height="17" viewBox="0 0 17 17"><path d="M0 0h8v8H0z" fill="#2bb0ee" /><path d="M9 0h8v8H9z" fill="#2199e2" /><path d="M0 9h8v8H0z" fill="#1795e0" /><path d="M9 9h8v8H9z" fill="#0c78d0" /></svg>
        <svg width="16" height="17" viewBox="0 0 16 17" fill="none" stroke="#222" className="ml-[15px]"><circle cx="9" cy="6.500" r="5.500" fill="#ecf0fa" strokeWidth="1.500" /><path d="M5 11l-4 5" strokeWidth="2" /></svg>
        <svg width="17" height="16" viewBox="0 0 17 16" className="ml-[13.5px]"><path d="M5 1h12v11H5z" fill="#f6f6f6" /><path d="M0 4h12v12H0z" fill="#2c2c2c" /><path d="M5 4h7v7H5z" fill="#b5b5b5" /></svg>
        <svg width="17" height="17" viewBox="0 0 17 17" className="ml-[14.5px]"><path d="M8.500 0a8.300 8.300 0 1 1-4 15.500L0 17l1.500-4.500A8.300 8.300 0 0 1 8.500 0z" fill="#6a63bf" /><rect x="4" y="5" width="6.500" height="6.500" rx="1.500" fill="#fff" /><path d="M11 8l2.500-2v5z" fill="#fff" /></svg>
        <svg width="18" height="17" viewBox="0 0 18 17" className="ml-[13.5px]"><circle cx="9" cy="8.500" r="8.500" fill="#1f84cf" /><path d="M1 6C3-2 17-2 17.500 8c0 4-4 4-6 3 2-4-1-6-4-6S2 6 1 9z" fill="#3cc59b" /><path d="M1 8c3-5 9-3 9 1-3 0-2 5 5 4-3 5-13 5-14-5z" fill="#1464b0" /><path d="M9 8c-2 2 1 5 6 4" fill="none" stroke="#dfe9fa" strokeWidth="1.500" /></svg>
        <svg width="18" height="16" viewBox="0 0 18 16" className="ml-[12.5px]"><path d="M0 1h7l2 2h9v12H0z" fill="#efb02e" /><path d="M0 4h18v11H0z" fill="#ffd45f" /><path d="M3 15v-2a2 2 0 0 1 2-2h8a2 2 0 0 1 2 2v2z" fill="#1a78cc" /></svg>
        <svg width="16" height="17" viewBox="0 0 16 17" className="ml-[14px]"><path d="M5 4V1h6v3" fill="none" stroke="#2ba6e0" strokeWidth="1.300" /><rect y="3" width="16" height="14" rx="2" fill="#174f86" /><path d="M4.500 6.500h3v3h-3z" fill="#ee5a2a" /><path d="M8.500 6.500h3v3h-3z" fill="#7dbb32" /><path d="M4.500 10.500h3v3h-3z" fill="#2aa7ea" /><path d="M8.500 10.500h3v3h-3z" fill="#fcb92c" /></svg>
        <div className="ml-[15px] relative"><svg width="16" height="16" viewBox="0 0 16 16"><circle cx="8" cy="8" r="8" fill="#1ed05f" /><path d="M3 5.500c3.500-1 7.500-.7 10.500.8M3.500 8.300c3-.8 6-.5 8.800.7M4 11c2.500-.6 5-.3 7.200.7" fill="none" stroke="#111" strokeWidth="1.400" strokeLinecap="round" /></svg><div className="absolute top-[19px] left-[6px] w-[4px] h-[1.5px] bg-[#777] rounded" /></div>
        <div className="ml-[10px] w-[25px] h-[26px] rounded-[3px] bg-[#edf0fb] relative flex items-center justify-center">
          <svg width="17" height="17" viewBox="0 0 17 17"><path d="M6 2l11-1v8l-10 3z" fill="#a98a20" /><path d="M5 4l7 1-4 7z" fill="#1a6a2c" /><path d="M6 2l10 6M16 1l-7 5M6 2l11-1v8" fill="none" stroke="#332a10" /><circle cx="4" cy="9" r="3.500" fill="#dfe6ea" stroke="#bbb" strokeWidth=".5" /><path d="M8 11l4 5" stroke="#222" strokeWidth="1.500" /></svg>
          <div className="absolute bottom-0 left-[7px] w-[11px] h-[2px] rounded bg-[#0f6fc5]" />
        </div>
      </div>
      <div className="ml-auto flex items-center pr-[14.5px]">
        <svg width="9" height="6" viewBox="0 0 9 6" fill="none" stroke="#333"><path d="M.5 5l4-4 4 4" /></svg>
        <svg width="12" height="9" viewBox="0 0 12 9" className="ml-[7px]"><path d="M2 8.500C-1 6 1 3.500 3 3.500c1-4 6-3 6.500 0C12 4 12 8 10 8.500z" fill="#777" stroke="#444" strokeWidth=".8" /><path d="M2 8.500l5-3 4 2-1 1z" fill="#eee" /></svg>
        <span className="ml-[10px] w-[20px] text-center text-[8px] leading-[11px] tracking-[-0.1px] -mt-[1px]">ENG<br />IN</span>
        <svg width="12" height="9" viewBox="0 0 12 9" className="ml-[11px]" fill="none" stroke="#333" strokeWidth=".9"><path d="M.5 3.500c3-3.500 8-3.500 11 0M2.300 5.300c2-2 5.400-2 7.400 0M4 7c1-1 3-1 4 0" /><circle cx="6" cy="8" r=".8" fill="#333" /></svg>
        <svg width="12" height="8" viewBox="0 0 12 8" className="ml-[4.5px]" fill="none" stroke="#333" strokeWidth=".9"><path d="M.5 2.500h2L5 .5v7L2.500 5.500h-2zM8 2.500l3.500 3M11.500 2.500L8 5.500" /></svg>
        <svg width="12" height="8" viewBox="0 0 12 8" className="ml-[5px]" fill="none" stroke="#333" strokeWidth=".9"><rect x=".5" y=".8" width="9.500" height="6.500" rx="1.500" /><path d="M2 2.300h2.500v3.500H2z" fill="#222" /><path d="M11.500 3v2" /></svg>
        <span className="ml-[7.5px] w-[40px] text-right text-[8px] leading-[11px] tracking-[-0.1px] -mt-[1px]">11:04<br />10/9/2022</span>
        <span className="ml-[8px] w-[11.5px] h-[11.5px] rounded-full bg-[#0b74cf] text-white text-[7px] leading-none flex items-center justify-center">1</span>
      </div>
    </div>
  );
}

export default function App() {
  return (
    <div className="w-[1080px] h-[2400px] bg-black flex flex-col overflow-hidden">
      <StatusBar />
      <div className="h-[176px] shrink-0 flex items-center justify-between pl-[44px] pr-[33px]">
        <svg width="66" height="66" viewBox="0 0 24 24" fill="#fff"><path d="M20 11H7.830l5.590-5.590L12 4l-8 8 8 8 1.410-1.410L7.830 13H20v-2z" /></svg>
        <svg width="66" height="66" viewBox="0 0 24 24" fill="#fff"><circle cx="12" cy="6" r="2.050" /><circle cx="12" cy="12" r="2.050" /><circle cx="12" cy="18" r="2.050" /></svg>
      </div>
      <div className="mt-[632px] h-[608px] shrink-0 bg-white flex flex-col font-['Liberation_Sans',sans-serif] overflow-hidden">
        <TopBars />
        <NavBar />
        <div className="h-[412px] shrink-0 flex"><Workspace /><SimPanel /></div>
        <PlayBar />
        <div className="h-[60px] shrink-0 flex bg-white"><Devices /><Picker /><Scenario /><PduList /></div>
        <Taskbar />
      </div>
      <div className="mt-[713.5px] shrink-0 flex text-[#e8e8ec] font-['Roboto'] font-medium text-[39.5px] leading-[46px]">
        <div className="w-[200px] ml-[186px] flex flex-col items-center">
          <svg width="66" height="66" viewBox="0 0 24 24" fill="none" stroke="#fff" strokeWidth="2"><circle cx="18" cy="5" r="2" /><circle cx="6" cy="12" r="2" /><circle cx="18" cy="19" r="2" /><path d="M7.800 11l8.400-4.900M7.800 13l8.400 4.900" /></svg>
          <span className="mt-[11px] tracking-[0.2px]">Share</span>
        </div>
        <div className="w-[200px] ml-[296px] flex flex-col items-center">
          <svg width="66" height="66" viewBox="0 0 24 24" fill="none" stroke="#fff" strokeWidth="2"><path d="M4 10V8a4 4 0 0 1 4-4h2M14 4h2a4 4 0 0 1 4 4v2M4 14v2a4 4 0 0 0 4 4h2" /><circle cx="12" cy="12" r="3.700" fill="#fff" stroke="none" /><circle cx="18" cy="18" r="2" fill="#fff" stroke="none" /></svg>
          <span className="mt-[11px] tracking-[0.2px]">Lens</span>
        </div>
      </div>
      <div className="mx-auto mt-[36.5px] w-[198px] h-[6px] rounded-full bg-[#8e8e8e] shrink-0" />
    </div>
  );
}
